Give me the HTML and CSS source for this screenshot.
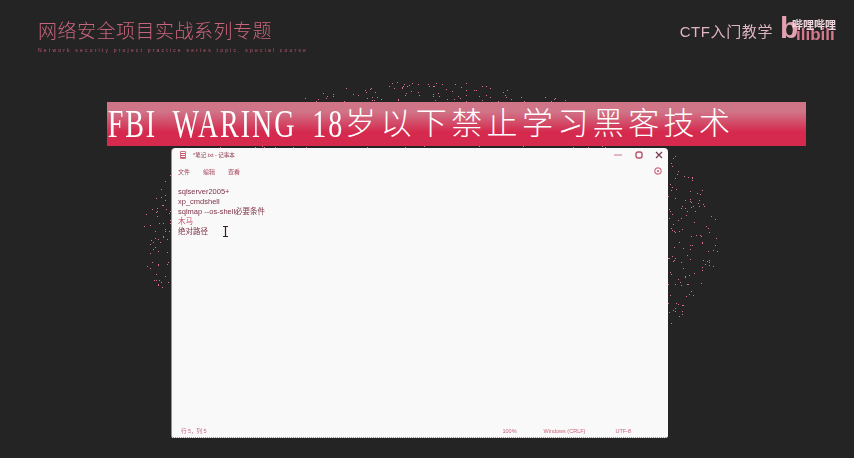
FILE: index.html
```html
<!DOCTYPE html>
<html lang="en">
<head>
  <meta charset="UTF-8" />
  <meta name="viewport" content="width=device-width, initial-scale=1.0"/>
  <title>CTF入门教学</title>
  <link rel="stylesheet" href="styles.css">
</head>
<body>

  <canvas id="dots" class="dots" width="854" height="458"></canvas>

  <header class="top">
    <div class="series">
      <h1 class="series-title">网络安全项目实战系列专题</h1>
      <p class="series-sub">Network security project practice series topic, special course</p>
    </div>
    <div class="brand">
      <span class="brand-name">CTF入门教学</span>
      <div class="logo">
        <span class="logo-b">b</span>
        <span class="logo-rest">ilibili</span>
        <span class="logo-cn">哔哩哔哩</span>
      </div>
    </div>
  </header>

  <div class="banner">
    <span class="banner-latin">FBI WARING 18</span><span class="banner-cn">岁以下禁止学习黑客技术</span>
  </div>

  <main class="notepad">
    <div class="titlebar">
      <svg class="app-icon" width="6" height="8" viewBox="0 0 6 8">
        <path d="M.5 .5h5v7h-5z" fill="#fff" stroke="#d07488"/>
        <path d="M1 2.500h4M1 4.500h4M1 6.500h4" stroke="#c8506c"/>
      </svg>
      <span class="doc-name">*笔记.txt - 记事本</span>
      <div class="controls">
        <svg width="8" height="8" viewBox="0 0 8 8"><path d="M0 4h8" stroke="#d07488"/></svg>
        <svg width="8" height="8" viewBox="0 0 8 8"><rect x="1" y="1" width="6" height="6" rx="2" fill="none" stroke="#b8506a" stroke-width="1.4"/></svg>
        <svg width="8" height="8" viewBox="0 0 8 8"><path d="M1 1l6 6M7 1L1 7" stroke="#7a3a4c" stroke-width="1.2"/></svg>
      </div>
    </div>

    <div class="menubar">
      <nav class="menus">
        <span>文件</span>
        <span>编辑</span>
        <span>查看</span>
      </nav>
      <svg width="8" height="8" viewBox="0 0 8 8">
        <circle cx="4" cy="4" r="3.2" fill="none" stroke="#d07488" stroke-width="1.2"/>
        <circle cx="4" cy="4" r="1" fill="#c8506c"/>
      </svg>
    </div>

    <div class="editor">
      <div>sqlserver2005+</div>
      <div>xp_cmdshell</div>
      <div>sqlmap --os-shell必要条件</div>
      <div class="pink">木马</div>
      <div>绝对路径</div>
      <svg class="ibeam" width="7" height="11" viewBox="0 0 7 11">
        <path d="M1 .5h5M1 10.500h5M3.500 .5v10" fill="none" stroke="#33202a" stroke-width="1.2"/>
      </svg>
    </div>

    <footer class="statusbar">
      <span class="pos">行 5，列 5</span>
      <span class="zoom">100%</span>
      <span class="eol">Windows (CRLF)</span>
      <span class="enc">UTF-8</span>
    </footer>
  </main>

  <script src="dots.js"></script>

</body>
</html>
```

FILE: styles.css
```css
* {
  box-sizing: border-box;
}

html, body {
  height: 100%;
}

body {
  margin: 0;
  height: 458px;
  overflow: hidden;
  position: relative;
  background: #242424;
  font-family: "Liberation Sans", "Noto Sans CJK SC", sans-serif;
  display: flex;
  flex-direction: column;
}

.dots {
  position: absolute;
  left: 0;
  top: 0;
}

.top {
  position: relative;
  height: 102px;
  padding: 15px 16px 0 38px;
  display: flex;
  justify-content: space-between;
  align-items: flex-start;
}

.series-title {
  margin: 6px 0 0;
  font-size: 19px;
  line-height: 22px;
  font-weight: 300;
  letter-spacing: 0.5px;
  color: #c8647c;
}

.series-sub {
  margin: 4px 0 0;
  font-size: 5px;
  line-height: 6px;
  letter-spacing: 2.200px;
  color: #b85a70;
  white-space: nowrap;
}

.brand {
  display: flex;
  align-items: center;
  gap: 7px;
}

.brand-name {
  font-size: 15px;
  margin-top: 2px;
  letter-spacing: 0.6px;
  color: #e0b4c0;
}

.logo {
  position: relative;
  width: 58px;
  height: 28px;
  color: #e2a0b0;
  font-weight: 700;
  white-space: nowrap;
}

.logo-b {
  position: absolute;
  left: 0;
  top: -3px;
  font-size: 30px;
  line-height: 32px;
}

.logo-rest {
  position: absolute;
  left: 16px;
  top: 10px;
  font-size: 17px;
  line-height: 20px;
  color: #d4788e;
}

.logo-cn {
  position: absolute;
  left: 12px;
  top: 3px;
  font-size: 11px;
  line-height: 14px;
  color: #f0d8de;
}

.banner {
  position: relative;
  margin-left: 107px;
  width: 699px;
  height: 44px;
  display: flex;
  align-items: center;
  white-space: nowrap;
  color: #fff;
  background: linear-gradient(#d07488 0, #d07488 22%, #d52a4e 68%, #d52a4e 100%);
}

.banner-latin {
  display: inline-block;
  width: 236px;
  font-family: "Liberation Serif", serif;
  font-size: 40px;
  line-height: 44px;
  letter-spacing: 2.800px;
  word-spacing: 10px;
  padding-left: 1px;
  transform: scaleX(0.7);
  transform-origin: left center;
}

.banner-cn {
  font-size: 31px;
  line-height: 44px;
  letter-spacing: 4.400px;
  font-weight: 300;
  margin-left: 2px;
}

.notepad {
  position: relative;
  margin: 2px 0 0 171px;
  width: 497px;
  height: 290px;
  display: flex;
  flex-direction: column;
  background: #f9f9f9;
  border-left: 1px solid #d07488;
  border-bottom: 1px dotted #d07488;
  border-radius: 4px 4px 2px 2px;
  color: #b8506a;
}

.titlebar {
  height: 13px;
  padding: 1px 6px 0 8px;
  display: flex;
  align-items: center;
}

.doc-name {
  margin-left: 7px;
  font-size: 5.500px;
  color: #8e3a50;
}

.controls {
  margin-left: auto;
  display: flex;
  width: 49px;
  margin-right: -1px;
  justify-content: space-between;
}

.menubar {
  height: 14px;
  margin-top: 3px;
  padding: 0 6px;
  display: flex;
  align-items: center;
  justify-content: space-between;
}

.menus {
  display: flex;
  gap: 13px;
  font-size: 6px;
  color: #a84660;
}

.editor {
  position: relative;
  flex: 1;
  padding: 9px 6px 0;
  font-size: 7.500px;
  line-height: 10px;
  color: #7e3448;
}

.editor .pink {
  color: #c8506c;
}

.ibeam {
  position: absolute;
  left: 50px;
  top: 48px;
}

.statusbar {
  height: 12px;
  display: flex;
  align-items: center;
  font-size: 5.500px;
  color: #c8647c;
}

.pos {
  margin-left: 9px;
}

.zoom {
  margin-left: auto;
}

.eol {
  margin-left: 27px;
}

.enc {
  margin-left: 30px;
  margin-right: 37px;
}
```

FILE: dots.js
```js
// particle sphere behind the window
var ctx = document.getElementById('dots').getContext('2d');
var seed = 17;

function rnd() {
  seed = (seed * 16807) % 2147483647;
  return seed / 2147483647;
}

ctx.fillStyle = '#e0708a';
for (var i = 0; i < 2800; i++) {
  var a = rnd() * Math.PI * 2;
  var r = Math.sqrt(rnd());
  var x = Math.round(430 + Math.cos(a) * r * 288);
  var y = Math.round(238 + Math.sin(a) * r * 157);
  if (y < 330) ctx.fillRect(x, y, 1, 1);
}
```
